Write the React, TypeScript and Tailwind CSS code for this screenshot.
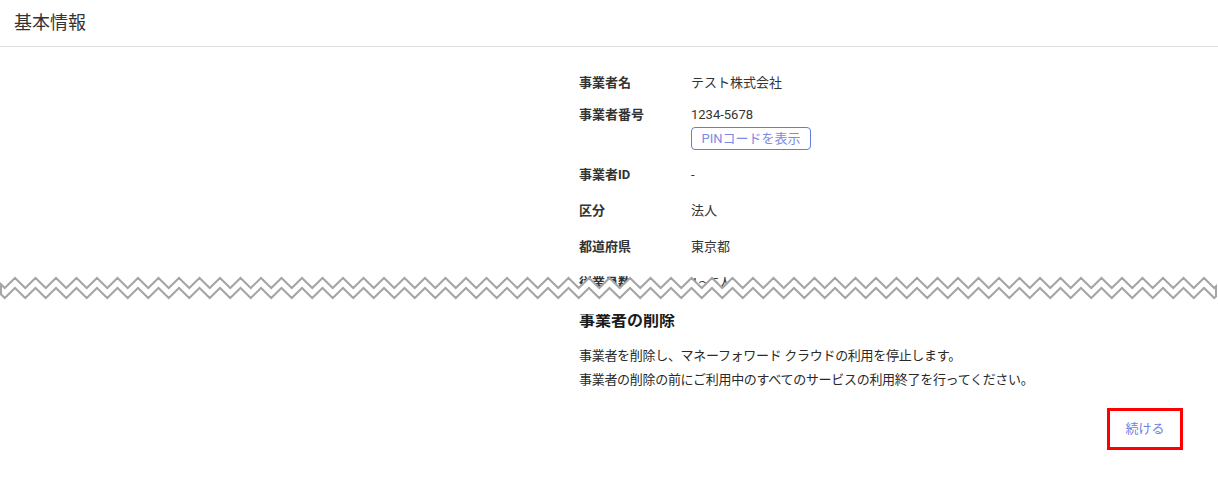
import React from "react";

const W = 1218;
const P = 20.5;
const FIRST = 15;

function zig(offset: number) {
  const top = 4 + offset;
  const bot = 14 + offset;
  const pts: [number, number][] = [];
  const yAt = (x: number) => {
    const d = (((x - FIRST) % P) + P) % P;
    const half = P / 2;
    return d <= half ? top + (bot - top) * (d / half) : bot - (bot - top) * ((d - half) / half);
  };
  pts.push([1, yAt(1)]);
  let x = FIRST - P / 2;
  while (x < W - 2) {
    if (x > 1) pts.push([x, yAt(x)]);
    x += P / 2;
  }
  pts.push([W - 2, yAt(W - 2)]);
  return pts;
}

function Zigzag() {
  const up = zig(0);
  const low = zig(10);
  const poly = [...up, ...low.slice().reverse()].map((p) => `${p[0].toFixed(2)},${p[1].toFixed(2)}`).join(" ");
  const cover = [...up, [W - 2, 40], [1, 40]].map((p) => `${(p as number[])[0]},${(p as number[])[1]}`).join(" ");
  return (
    <svg width={W} height={40} viewBox={`0 0 ${W} 40`} className="absolute left-0 top-[274px]">
      <polygon points={cover} fill="#ffffff" />
      <polygon points={poly} fill="#ffffff" stroke="#a5a5a5" strokeWidth={2} strokeLinejoin="miter" />
    </svg>
  );
}

function Row({ label, children, className }: { label: string; children: React.ReactNode; className?: string }) {
  return (
    <div className={`flex ${className ?? ""}`}>
      <div className="w-[112px] shrink-0 text-[13px] leading-[20px] font-bold text-[#333333]">{label}</div>
      <div className="text-[13px] leading-[20px] text-[#333333]">{children}</div>
    </div>
  );
}

export default function App() {
  return (
    <div
      className="relative w-[1218px] h-[494px] bg-white overflow-hidden"
      style={{ fontFamily: "Roboto, 'Noto Sans CJK JP', sans-serif" }}
    >
      <div className="h-[47px] border-b border-[#e0e0e0] flex items-center pl-[14px]">
        <span className="text-[18px] leading-[24px] text-[#333333]">基本情報</span>
      </div>
      <div className="flex">
        <div className="w-[579px] shrink-0" />
        <div className="flex-1 flex flex-col">
          <Row label="事業者名" className="mt-[26px]">テスト株式会社</Row>
          <Row label="事業者番号" className="mt-[12px]">
            <div>1234-5678</div>
            <button className="mt-[2px] h-[23px] w-[120px] border border-[#5b7fe6] rounded-[4px] text-[13px] leading-[21px] text-[#7b8be3] bg-white">
              PINコードを表示
            </button>
          </Row>
          <Row label="事業者ID" className="mt-[15px]">-</Row>
          <Row label="区分" className="mt-[16px]">法人</Row>
          <Row label="都道府県" className="mt-[16px]">東京都</Row>
          <Row label="従業員数" className="mt-[16px]">1〜5人</Row>
          <h2 className="mt-[16px] text-[16px] leading-[24px] font-bold text-[#1a1a1a]">事業者の削除</h2>
          <div className="mt-[11px] text-[13px] leading-[24px] text-[#2a2a2a] tracking-[-0.3px]">
            <p>事業者を削除し、マネーフォワード クラウドの利用を停止します。</p>
            <p>事業者の削除の前にご利用中のすべてのサービスの利用終了を行ってください。</p>
          </div>
          <div className="mt-[16px] flex justify-end pr-[35px]">
            <button className="w-[76px] h-[42px] border-[3px] border-[#ff0000] text-[13px] text-[#6e80e4] bg-white">
              続ける
            </button>
          </div>
        </div>
      </div>
      <Zigzag />
    </div>
  );
}
